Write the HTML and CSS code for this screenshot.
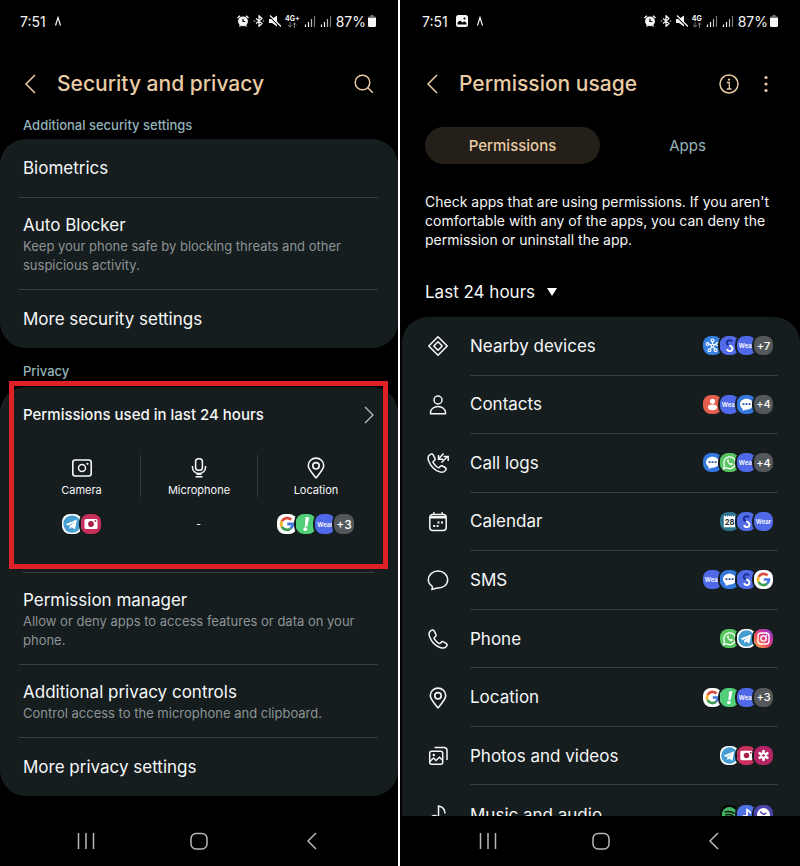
FILE: index.html
```html
<!DOCTYPE html>
<html lang="en">
<head>
  <meta charset="UTF-8">
  <meta name="viewport" content="width=device-width, initial-scale=1">
  <title>Security and privacy</title>
  <link rel="stylesheet" href="styles.css">
</head>
<body>

  <!-- icon sprite -->
  <svg class="sprite" aria-hidden="true">
    <defs>
      <linearGradient id="insta-bg" x1="0" y1="1" x2="1" y2="0">
        <stop offset="0" stop-color="#f9c04e"/>
        <stop offset=".4" stop-color="#ef4a5a"/>
        <stop offset=".7" stop-color="#c133a8"/>
        <stop offset="1" stop-color="#6a45d8"/>
      </linearGradient>
    </defs>

    <symbol id="i-alarm" viewBox="0 0 12 12">
      <path d="M.5 3L3 .8M11.5 3L9 .8M2.5 11.5l1-1.2M9.5 11.5l-1-1.2" stroke="currentColor" stroke-width="1.4"/>
      <circle cx="6" cy="6.3" r="4.9" fill="currentColor"/>
      <path d="M6 3.8v2.7h2.3" stroke="#000" stroke-width="1.2" fill="none"/>
    </symbol>
    <symbol id="i-bt" viewBox="0 0 12 12">
      <path d="M3 3.5l6 5-3 2.8V.7l3 2.8-6 5M.8 6h1.4M9.8 6h1.4" fill="none" stroke="currentColor" stroke-width="1.2"/>
    </symbol>
    <symbol id="i-mute" viewBox="0 0 12 12">
      <path d="M0 4h3l5-3.5v11L3 8H0z" fill="currentColor"/>
      <path d="M0 1l11 11" stroke="#000" stroke-width="1.2"/>
      <path d="M1 .5l11 11" stroke="currentColor" stroke-width="1.3"/>
    </symbol>
    <symbol id="i-signal" viewBox="0 0 12 12">
      <path d="M1.5 12V9.5M4.5 12V7" stroke="currentColor" stroke-width="1.2"/>
      <path d="M7.5 12V4" stroke="#bbb" stroke-width="1.2"/>
      <path d="M10.5 12V1" stroke="#777" stroke-width="1.2"/>
    </symbol>
    <symbol id="i-battery" viewBox="0 0 8 12">
      <path d="M2.5 0h3v1.5H7a1 1 0 0 1 1 1V4H0V2.5a1 1 0 0 1 1-1h1.5z" fill="#777"/>
      <path d="M0 3h8v7.5a1.5 1.5 0 0 1-1.5 1.5h-5A1.5 1.5 0 0 1 0 10.500z" fill="currentColor"/>
    </symbol>
    <symbol id="i-caret" viewBox="0 0 8 10">
      <path d="M1.5 9.500L4 1.500 6.500 9.500" fill="none" stroke="currentColor" stroke-width="1.200"/>
    </symbol>
    <symbol id="i-picture" viewBox="0 0 12 12">
      <rect width="12" height="12" rx="2.5" fill="currentColor"/>
      <path d="M1.5 9.5V7.5L4 5.5l2.500 2 1.800-1.200 2.200 1.800v1.400z" fill="#000"/>
      <circle cx="8.5" cy="3.5" r="1.1" fill="#000"/>
    </symbol>
    <symbol id="i-updown" viewBox="0 0 10 6">
      <path d="M3 0v5M1 3.2L3 5l2-1.800M7.500 6V1M5.700 2.800L7.500 1l2 1.800" fill="none" stroke="#888" stroke-width=".9"/>
    </symbol>

    <symbol id="i-back" viewBox="0 0 24 24">
      <path d="M16 3L7 12l9 9" fill="none" stroke="currentColor" stroke-width="1.5"/>
    </symbol>
    <symbol id="i-search" viewBox="0 0 20 20">
      <path d="M13.8 13.8l5 5" stroke="currentColor" stroke-width="1.6"/>
      <circle cx="8.5" cy="8.5" r="7.3" fill="none" stroke="currentColor" stroke-width="1.5"/>
    </symbol>
    <symbol id="i-info" viewBox="0 0 20 20">
      <circle cx="10" cy="10" r="9" fill="none" stroke="currentColor" stroke-width="1.5"/>
      <path d="M7.8 8.5h2.5V15M7.7 15h4.8" fill="none" stroke="currentColor" stroke-width="1.3"/>
      <circle cx="10" cy="5.7" r="1.1" fill="currentColor"/>
    </symbol>
    <symbol id="i-dots" viewBox="0 0 20 20">
      <circle cx="10" cy="3.5" r="1.6" fill="currentColor"/>
      <circle cx="10" cy="10" r="1.6" fill="currentColor"/>
      <circle cx="10" cy="16.5" r="1.6" fill="currentColor"/>
    </symbol>
    <symbol id="i-next" viewBox="0 0 10 18">
      <path d="M1 1l8 8-8 8" fill="none" stroke="currentColor" stroke-width="1.3"/>
    </symbol>

    <symbol id="i-camera" viewBox="0 0 22 22">
      <rect x="1.8" y="3" width="18.4" height="16" rx="2.5" fill="none" stroke="currentColor" stroke-width="1.6"/>
      <circle cx="11" cy="11" r="3.5" fill="none" stroke="currentColor" stroke-width="1.5"/>
      <circle cx="16.5" cy="6.8" r="1.1" fill="currentColor"/>
    </symbol>
    <symbol id="i-mic" viewBox="0 0 22 22">
      <rect x="7.6" y="1.7" width="6.8" height="11.6" rx="2.8" fill="none" stroke="currentColor" stroke-width="1.5"/>
      <path d="M4.5 9v1.500a6.500 6 0 0 0 13 0V9M7.500 19.800h7M8.500 17.200h5" fill="none" stroke="currentColor" stroke-width="1.500"/>
    </symbol>
    <symbol id="i-pin" viewBox="0 0 22 22">
      <path d="M11 20.800C7.500 16.500 3.300 12.500 3.300 8.600a7.700 7.500 0 0 1 15.400 0C18.700 12.500 14.500 16.500 11 20.800z" fill="none" stroke="currentColor" stroke-width="1.600"/>
      <circle cx="11" cy="8.8" r="3.2" fill="none" stroke="currentColor" stroke-width="1.6"/>
    </symbol>
    <symbol id="i-nearby" viewBox="0 0 22 22">
      <path d="M11 1.800l9.200 9.200-9.200 9.200L1.800 11zM11 6.800l4.200 4.200-4.200 4.200L6.800 11z" fill="none" stroke="currentColor" stroke-width="1.600" stroke-linejoin="round"/>
    </symbol>
    <symbol id="i-person" viewBox="0 0 22 22">
      <circle cx="11" cy="6" r="4" fill="none" stroke="currentColor" stroke-width="1.5"/>
      <path d="M3.500 19.800V18.500a7.500 6 0 0 1 15 0v1.300z" fill="none" stroke="currentColor" stroke-width="1.500" stroke-linejoin="round"/>
    </symbol>
    <symbol id="i-phone" viewBox="0 0 22 22">
      <path d="M4.300 2.300C2.200 3.500 1.500 5.500 2.500 8.500c2 5.500 6 9.700 11.300 11.200 2.500.7 4.800.2 6-1.900.6-1.100.2-2-.7-2.500l-2.600-1.500c-.9-.5-1.800-.3-2.400.5l-.6.8c-.5.600-1.100.6-1.700.2a16 16 0 0 1-4.500-4.500c-.4-.6-.3-1.200.3-1.700l.7-.5c.8-.6 1-1.400.6-2.200L7.300 3.200C6.600 1.900 5.500 1.600 4.300 2.300z" fill="none" stroke="currentColor" stroke-width="1.500" stroke-linejoin="round"/>
    </symbol>
    <symbol id="i-calllog" viewBox="0 0 22 22">
      <path d="M3.300 2.300C1.200 3.500.5 5.500 1.500 8.500c2 5.500 6 9.900 11.300 11.400 2.500.7 4.800.2 6-1.900.6-1.100.2-2-.7-2.500l-2.600-1.500c-.9-.5-1.800-.3-2.400.5l-.6.8c-.5.6-1.100.600-1.700.2a16 16 0 0 1-4.500-4.700c-.4-.6-.3-1.200.3-1.700l.7-.5c.8-.6 1-1.400.6-2.200L6.300 3.200C5.600 1.900 4.500 1.600 3.300 2.300z" fill="none" stroke="currentColor" stroke-width="1.500" stroke-linejoin="round"/>
      <path d="M16.500 1.500l-4.500 5M11.500 3v4.300H16M14.500 10.500l5.500-5.500M16.500 4.500h4.700V9" fill="none" stroke="currentColor" stroke-width="1.500"/>
    </symbol>
    <symbol id="i-calendar" viewBox="0 0 22 22">
      <rect x="2.8" y="3.5" width="16.4" height="16" rx="3" fill="none" stroke="currentColor" stroke-width="1.5"/>
      <path d="M3 5h16v2.500H3zM6 1.200h1.600V4H6zM14.400 1.200H16V4h-1.600z" fill="currentColor"/>
      <path d="M10.500 11.500h2M14 11.500h2M6.200 15h2M9.600 15h2" stroke="currentColor" stroke-width="1.800"/>
    </symbol>
    <symbol id="i-bubble" viewBox="0 0 22 22">
      <path d="M4.800 20.500c.7-1.200.8-2.300.3-3.300C2.800 15.600 1.300 13.300 1.300 10.800c0-4.900 4.300-8.700 9.700-8.700s9.700 3.800 9.700 8.700-4.300 8.200-9.700 8.200c-2 .1-3.700.9-6.200 1.500z" fill="none" stroke="currentColor" stroke-width="1.500" stroke-linejoin="round"/>
    </symbol>
    <symbol id="i-photos" viewBox="0 0 22 22">
      <path d="M7.500 2.500H17a3 3 0 0 1 3 3V15" fill="none" stroke="currentColor" stroke-width="1.500"/>
      <rect x="2.700" y="6.200" width="13" height="13" rx="2" fill="none" stroke="currentColor" stroke-width="1.500"/>
      <path d="M3 16.500l3.500-3.500 2.500 2.500 3.500-3.300 3 3" fill="none" stroke="currentColor" stroke-width="1.400"/>
      <circle cx="6.800" cy="10" r="1.200" fill="currentColor"/>
    </symbol>
    <symbol id="i-music" viewBox="0 0 22 22">
      <circle cx="7.500" cy="15.500" r="4" fill="none" stroke="currentColor" stroke-width="1.500"/>
      <path d="M11.500 15.500V2c2.500.5 6.500 2.300 6.500 7.500" fill="none" stroke="currentColor" stroke-width="1.500"/>
    </symbol>

    <symbol id="n-recent" viewBox="0 0 20 20">
      <path d="M2.500 2v16M10 2v16M17.500 2v16" stroke="currentColor" stroke-width="1.500"/>
    </symbol>
    <symbol id="n-home" viewBox="0 0 20 20">
      <rect x="2" y="2.500" width="16" height="15.500" rx="5" fill="none" stroke="currentColor" stroke-width="1.500"/>
    </symbol>
    <symbol id="n-back" viewBox="0 0 20 20">
      <path d="M14 2L6 10l8 8" fill="none" stroke="currentColor" stroke-width="1.500"/>
    </symbol>

    <!-- app badges -->
    <symbol id="a-telegram" viewBox="0 0 20 20">
      <rect width="20" height="20" fill="#fff"/>
      <circle cx="10" cy="10" r="8.700" fill="#459dd1"/>
      <path d="M3.500 10.200L15 5.500l-2 10-3.300-2.300-1.800 1.700-.4-3L13 7.500l-6.500 4z" fill="#fff"/>
    </symbol>
    <symbol id="a-camera" viewBox="0 0 20 20">
      <rect width="20" height="20" fill="#c92f5c"/>
      <rect x="3.500" y="5" width="13" height="10" rx="1.500" fill="#fff"/>
      <circle cx="10" cy="10" r="2.900" fill="#a82148"/>
      <circle cx="14.500" cy="7" r=".9" fill="#a82148"/>
    </symbol>
    <symbol id="a-google" viewBox="0 0 20 20">
      <rect width="20" height="20" fill="#fff"/>
      <g fill="none" stroke-width="2.800">
        <path d="M14.200 5.800A5.800 5.800 0 0 0 4.900 7.200" stroke="#dc4c3e"/>
        <path d="M4.900 7.200a5.800 5.800 0 0 0 0 5.600" stroke="#efb62e"/>
        <path d="M4.900 12.800a5.800 5.800 0 0 0 8.800 1.700" stroke="#3a9d53"/>
        <path d="M13.700 14.500a5.800 5.800 0 0 0 2.100-4.500H10.300" stroke="#4479dc"/>
      </g>
    </symbol>
    <symbol id="a-alert" viewBox="0 0 20 20">
      <rect width="20" height="20" fill="#50cf79"/>
      <path d="M9.500 3.300h3.700l-2 9.200H8.800z" fill="#fff"/>
      <circle cx="9.300" cy="15.200" r="1.900" fill="#fff"/>
    </symbol>
    <symbol id="a-hub" viewBox="0 0 20 20">
      <rect width="20" height="20" fill="#357fe0"/>
      <g fill="none" stroke="#fff" stroke-width="1.200">
        <path d="M10 10V5M10 10L5 8M10 10l5-2M10 10l-3 5M10 10l3 5"/>
        <circle cx="10" cy="4.700" r="1.500" fill="#357fe0"/>
        <circle cx="4.800" cy="8.500" r="1.500" fill="#357fe0"/>
        <circle cx="15.200" cy="8.500" r="1.500" fill="#357fe0"/>
        <circle cx="6.800" cy="15" r="1.500" fill="#357fe0"/>
        <circle cx="13.200" cy="15" r="1.500" fill="#357fe0"/>
        <circle cx="10" cy="10.200" r="1.500" fill="#357fe0"/>
      </g>
    </symbol>
    <symbol id="a-switch" viewBox="0 0 20 20">
      <rect width="20" height="20" fill="#526be6"/>
      <path d="M12.800 5.800A3.200 3.200 0 0 0 7 7.200c0 2.600 3 2.300 4 3.500" fill="none" stroke="#1c2f9d" stroke-width="2.200"/>
      <path d="M9.500 9.800c2 .8 3.700 1.300 3.700 3.500a2.900 2.900 0 0 1-5.700.4" fill="none" stroke="#fff" stroke-width="2"/>
    </symbol>
    <symbol id="a-contacts" viewBox="0 0 20 20">
      <rect width="20" height="20" fill="#e4604c"/>
      <circle cx="10" cy="6.700" r="2.700" fill="#fff"/>
      <ellipse cx="10" cy="13" rx="4.800" ry="3" fill="#fff"/>
    </symbol>
    <symbol id="a-messages" viewBox="0 0 20 20">
      <rect width="20" height="20" fill="#3478de"/>
      <path d="M10 4c4 0 6.800 2.500 6.800 5.800S14 15.500 10 15.500c-1.800 0-2.500 1-4.500.8.500-.8.500-1.300.2-2C4.200 13.200 3.200 11.600 3.200 9.800 3.200 6.500 6 4 10 4z" fill="#fff"/>
      <path d="M5.800 9.700h2M9 9.700h2M12.200 9.700h2" stroke="#21509f" stroke-width="1.900"/>
    </symbol>
    <symbol id="a-whatsapp" viewBox="0 0 20 20">
      <rect width="20" height="20" fill="#57c560"/>
      <path d="M3.700 16.500l1-3.500A6.200 6.200 0 1 1 7 15.500z" fill="none" stroke="#fff" stroke-width="1.400"/>
      <path d="M7.500 7c-.5 3 2.500 6 5.500 5.800l.6-1.500-1.800-1-1 .8c-1-.5-1.600-1.100-2-2.100l.7-.9L8.700 6.300z" fill="#fff"/>
    </symbol>
    <symbol id="a-instagram" viewBox="0 0 20 20">
      <rect width="20" height="20" fill="url(#insta-bg)"/>
      <rect x="4.200" y="4.200" width="11.600" height="11.600" rx="3.200" fill="none" stroke="#fff" stroke-width="1.400"/>
      <circle cx="10" cy="10" r="2.800" fill="none" stroke="#fff" stroke-width="1.400"/>
      <circle cx="13.300" cy="6.700" r=".8" fill="#fff"/>
    </symbol>
    <symbol id="a-gallery" viewBox="0 0 20 20">
      <rect width="20" height="20" fill="#b42565"/>
      <path d="M10 10V5.500M10 10l3.900-2.300M10 10l3.900 2.300M10 10v4.500M10 10l-3.900 2.300M10 10L6.100 7.700" stroke="#fff" stroke-width="2.900" stroke-linecap="round"/>
      <circle cx="10" cy="10" r="1.400" fill="#b42565"/>
    </symbol>
    <symbol id="a-spotify" viewBox="0 0 20 20">
      <rect width="20" height="20" fill="#050a07"/>
      <circle cx="10" cy="10" r="8" fill="#43b563"/>
      <path d="M4.800 7.500c3.500-1 7.500-.6 10.500 1.200M5.500 10.500c3-.8 6.200-.4 8.700 1M6 13.200c2.500-.6 5-.3 7 .8" fill="none" stroke="#0b150e" stroke-width="1.500"/>
    </symbol>
    <symbol id="a-music" viewBox="0 0 20 20">
      <rect width="20" height="20" fill="#4d72e6"/>
      <path d="M10.500 13.500V4c.5 2.500 3.700 2 3.700 5" fill="none" stroke="#fff" stroke-width="1.800"/>
      <circle cx="8" cy="13.500" r="3" fill="#fff"/>
    </symbol>
    <symbol id="a-clock" viewBox="0 0 20 20">
      <rect width="20" height="20" fill="#4b43ab"/>
      <circle cx="10" cy="10" r="6.800" fill="#fff"/>
      <path d="M6.500 7l3.500 3M10 10l3-1.500" stroke="#4b43ab" stroke-width="1.500"/>
    </symbol>
  </svg>

  <!-- Security and privacy -->
  <main class="phone phone-left">
    <div class="status">
      <span class="time">7:51</span>
      <svg class="caret"><use href="#i-caret"/></svg>
      <div class="status-icons">
        <svg><use href="#i-alarm"/></svg>
        <svg><use href="#i-bt"/></svg>
        <svg><use href="#i-mute"/></svg>
        <span class="net">4G+<svg><use href="#i-updown"/></svg></span>
        <svg><use href="#i-signal"/></svg>
        <svg><use href="#i-signal"/></svg>
        <span class="battery">87%<svg><use href="#i-battery"/></svg></span>
      </div>
    </div>

    <header class="header">
      <button class="icon-btn back" aria-label="Back"><svg><use href="#i-back"/></svg></button>
      <h1>Security and privacy</h1>
      <button class="icon-btn" aria-label="Search"><svg><use href="#i-search"/></svg></button>
    </header>

    <h2 class="section-label">Additional security settings</h2>
    <div class="card">
      <a class="item single" href="#"><span class="item-title">Biometrics</span></a>
      <a class="item" href="#">
        <span class="item-title">Auto Blocker</span>
        <span class="item-text">Keep your phone safe by blocking threats and other suspicious activity.</span>
      </a>
      <a class="item single" href="#"><span class="item-title">More security settings</span></a>
    </div>

    <h2 class="section-label privacy-label">Privacy</h2>
    <div class="card">
      <section class="usage">
        <a class="usage-head" href="#">
          <span>Permissions used in last 24 hours</span>
          <svg><use href="#i-next"/></svg>
        </a>
        <div class="usage-cols">
          <div class="usage-col">
            <div class="usage-kind"><svg><use href="#i-camera"/></svg>Camera</div>
            <div class="badges">
              <svg class="badge"><use href="#a-telegram"/></svg>
              <svg class="badge"><use href="#a-camera"/></svg>
            </div>
          </div>
          <div class="usage-col">
            <div class="usage-kind"><svg><use href="#i-mic"/></svg>Microphone</div>
            <div class="badges">-</div>
          </div>
          <div class="usage-col">
            <div class="usage-kind"><svg><use href="#i-pin"/></svg>Location</div>
            <div class="badges">
              <svg class="badge"><use href="#a-google"/></svg>
              <svg class="badge"><use href="#a-alert"/></svg>
              <span class="badge wear">Wear</span>
              <span class="badge more">+3</span>
            </div>
          </div>
        </div>
        <div class="highlight"></div>
      </section>
      <a class="item" href="#">
        <span class="item-title">Permission manager</span>
        <span class="item-text">Allow or deny apps to access features or data on your phone.</span>
      </a>
      <a class="item" href="#">
        <span class="item-title">Additional privacy controls</span>
        <span class="item-text">Control access to the microphone and clipboard.</span>
      </a>
      <a class="item single" href="#"><span class="item-title">More privacy settings</span></a>
    </div>

    <nav class="navbar">
      <button aria-label="Recent apps"><svg><use href="#n-recent"/></svg></button>
      <button aria-label="Home"><svg><use href="#n-home"/></svg></button>
      <button aria-label="Back"><svg><use href="#n-back"/></svg></button>
    </nav>
  </main>

  <!-- Permission usage -->
  <main class="phone phone-right">
    <div class="status">
      <span class="time">7:51</span>
      <svg><use href="#i-picture"/></svg>
      <svg class="caret"><use href="#i-caret"/></svg>
      <div class="status-icons">
        <svg><use href="#i-alarm"/></svg>
        <svg><use href="#i-bt"/></svg>
        <svg><use href="#i-mute"/></svg>
        <span class="net">4G<svg><use href="#i-updown"/></svg></span>
        <svg><use href="#i-signal"/></svg>
        <svg><use href="#i-signal"/></svg>
        <span class="battery">87%<svg><use href="#i-battery"/></svg></span>
      </div>
    </div>

    <header class="header">
      <button class="icon-btn back" aria-label="Back"><svg><use href="#i-back"/></svg></button>
      <h1>Permission usage</h1>
      <button class="icon-btn" aria-label="Info"><svg><use href="#i-info"/></svg></button>
      <button class="icon-btn" aria-label="More options"><svg><use href="#i-dots"/></svg></button>
    </header>

    <div class="tabs" role="tablist">
      <button class="tab active" role="tab" aria-selected="true">Permissions</button>
      <button class="tab" role="tab" aria-selected="false">Apps</button>
    </div>

    <p class="intro">Check apps that are using permissions. If you aren't comfortable with any of the apps, you can deny the permission or uninstall the app.</p>

    <div class="period">
      <select aria-label="Period">
        <option>Last 24 hours</option>
      </select>
      <svg viewBox="0 0 10 8"><path d="M0 0h10L5 8z" fill="#fff"/></svg>
    </div>

    <div class="list-wrap">
      <ul class="card list">
        <li>
          <svg class="row-icon"><use href="#i-nearby"/></svg>
          <a class="row" href="#">Nearby devices
            <span class="badges">
              <svg class="badge"><use href="#a-hub"/></svg>
              <svg class="badge"><use href="#a-switch"/></svg>
              <span class="badge wear">Wear</span>
              <span class="badge more">+7</span>
            </span>
          </a>
        </li>
        <li>
          <svg class="row-icon"><use href="#i-person"/></svg>
          <a class="row" href="#">Contacts
            <span class="badges">
              <svg class="badge"><use href="#a-contacts"/></svg>
              <span class="badge wear">Wear</span>
              <svg class="badge"><use href="#a-messages"/></svg>
              <span class="badge more">+4</span>
            </span>
          </a>
        </li>
        <li>
          <svg class="row-icon"><use href="#i-calllog"/></svg>
          <a class="row" href="#">Call logs
            <span class="badges">
              <svg class="badge"><use href="#a-messages"/></svg>
              <svg class="badge"><use href="#a-whatsapp"/></svg>
              <span class="badge wear">Wear</span>
              <span class="badge more">+4</span>
            </span>
          </a>
        </li>
        <li>
          <svg class="row-icon"><use href="#i-calendar"/></svg>
          <a class="row" href="#">Calendar
            <span class="badges">
              <svg class="badge" viewBox="0 0 20 20">
                <rect width="20" height="20" fill="#2f748d"/>
                <path d="M4 5l1-1.500L6 5l1-1.500L8 5l1-1.500L10 5l1-1.500L12 5l1-1.500L14 5l1-1.500L16 5v11H4z" fill="#fff"/>
                <text x="10" y="14" text-anchor="middle" class="badge-day">28</text>
              </svg>
              <svg class="badge"><use href="#a-switch"/></svg>
              <span class="badge wear">Wear</span>
            </span>
          </a>
        </li>
        <li>
          <svg class="row-icon"><use href="#i-bubble"/></svg>
          <a class="row" href="#">SMS
            <span class="badges">
              <span class="badge wear">Wear</span>
              <svg class="badge"><use href="#a-messages"/></svg>
              <svg class="badge"><use href="#a-switch"/></svg>
              <svg class="badge"><use href="#a-google"/></svg>
            </span>
          </a>
        </li>
        <li>
          <svg class="row-icon"><use href="#i-phone"/></svg>
          <a class="row" href="#">Phone
            <span class="badges">
              <svg class="badge"><use href="#a-whatsapp"/></svg>
              <svg class="badge"><use href="#a-telegram"/></svg>
              <svg class="badge"><use href="#a-instagram"/></svg>
            </span>
          </a>
        </li>
        <li>
          <svg class="row-icon"><use href="#i-pin"/></svg>
          <a class="row" href="#">Location
            <span class="badges">
              <svg class="badge"><use href="#a-google"/></svg>
              <svg class="badge"><use href="#a-alert"/></svg>
              <span class="badge wear">Wear</span>
              <span class="badge more">+3</span>
            </span>
          </a>
        </li>
        <li>
          <svg class="row-icon"><use href="#i-photos"/></svg>
          <a class="row" href="#">Photos and videos
            <span class="badges">
              <svg class="badge"><use href="#a-telegram"/></svg>
              <svg class="badge"><use href="#a-camera"/></svg>
              <svg class="badge"><use href="#a-gallery"/></svg>
            </span>
          </a>
        </li>
        <li>
          <svg class="row-icon"><use href="#i-music"/></svg>
          <a class="row" href="#">Music and audio
            <span class="badges">
              <svg class="badge"><use href="#a-spotify"/></svg>
              <svg class="badge"><use href="#a-music"/></svg>
              <svg class="badge"><use href="#a-clock"/></svg>
            </span>
          </a>
        </li>
      </ul>
    </div>

    <nav class="navbar">
      <button aria-label="Recent apps"><svg><use href="#n-recent"/></svg></button>
      <button aria-label="Home"><svg><use href="#n-home"/></svg></button>
      <button aria-label="Back"><svg><use href="#n-back"/></svg></button>
    </nav>
  </main>

</body>
</html>
```
FILE: styles.css
```css
* { box-sizing: border-box; }
body { margin: 0; display: grid; grid-template-columns: 1fr 1fr; height: 100vh; background: #000; color: #f5f7f7; font-family: Inter, Roboto, sans-serif; }
h1, h2, p, ul { margin: 0; padding: 0; }
ul { list-style: none; }
a { color: inherit; text-decoration: none; }
button, select { padding: 0; border: 0; background: none; color: inherit; font: inherit; }
svg { display: block; flex: none; }
.sprite { position: absolute; width: 0; height: 0; }

.phone { display: flex; flex-direction: column; min-width: 0; height: 100vh; }
.phone-left { border-right: 2px solid #fff; }
.phone-right { padding-left: 2px; }

/* status bar */
.status { display: flex; align-items: center; gap: 8px; height: 42px; padding: 0 22px 0 20px; font-size: 14px; }
.status svg { width: 12px; height: 12px; }
.status .caret { width: 8px; height: 10px; }
.status-icons { display: flex; align-items: center; gap: 4px; margin-left: auto; }
.net { display: flex; flex-direction: column; align-items: center; font-size: 7px; line-height: 7px; font-weight: 700; }
.status .net svg { width: 10px; height: 6px; }
.battery { display: flex; align-items: center; gap: 2px; }
.status .battery svg { width: 8px; }

/* header */
.header { display: flex; align-items: center; gap: 17px; height: 48px; margin-top: 18px; padding: 0 24px 0 19px; color: #e9cba5; }
.header h1 { flex: 1; margin-left: -3px; font-size: 21px; line-height: 28px; font-weight: 500; }
.icon-btn svg { width: 20px; height: 20px; }
.back svg { width: 24px; height: 24px; }

.section-label { margin: 7px 23px 4px; color: #93b3b9; font-size: 13px; line-height: 20px; font-weight: 500; }
.privacy-label { margin: 13px 23px 6px; }

.card { background: #161d1f; border-radius: 26px; }

/* settings items */
.item { display: block; margin: 0 20px 0 19px; padding: 15px 4px 14px; border-bottom: 1px solid #363d3f; }
.item:last-child { border-bottom: 0; }
.single { padding: 17px 4px; }
.item-title { display: block; font-size: 17px; line-height: 24px; }
.item-text { display: block; color: #8d9394; font-size: 13px; line-height: 19px; }

/* permissions used */
.usage { position: relative; margin: 0 24px 0 23px; padding: 16px 0 38px; border-bottom: 1px solid #363d3f; }
.usage-head { display: flex; justify-content: space-between; align-items: center; font-size: 15px; line-height: 24px; font-weight: 500; }
.usage-head svg { width: 10px; height: 18px; color: #b9bdbe; }
.usage-cols { display: grid; grid-template-columns: repeat(3, 1fr); margin-top: 28px; font-size: 11px; text-align: center; }
.usage-kind { display: flex; flex-direction: column; align-items: center; gap: 2px; height: 42px; padding-top: 2px; line-height: 18px; }
.usage-kind svg { width: 22px; height: 22px; }
.usage-col + .usage-col .usage-kind { border-left: 1px solid #363d3f; }
.usage-col .badges { height: 20px; margin-top: 17px; }
.highlight { position: absolute; top: -6px; right: -14px; bottom: 3px; left: -14px; border: 5px solid #de2027; pointer-events: none; }

/* app badges */
.badges { display: flex; justify-content: center; align-items: center; }
.badge { width: 20px; height: 20px; border-radius: 8px; overflow: hidden; box-shadow: 0 0 0 2px #161d1f; }
.badge + .badge { margin-left: -1px; }
.wear, .more { display: flex; flex: none; justify-content: center; align-items: center; color: #fff; white-space: nowrap; }
.wear { background: #5069e8; font-size: 6px; font-weight: 600; }
.more { background: #55585a; font-size: 12px; font-weight: 500; }
.badge-day { font-size: 8px; font-weight: 700; fill: #20323a; }

/* tabs */
.tabs { display: grid; grid-template-columns: 1fr 1fr; margin: 19px 25px 0 23px; }
.tab { height: 37px; border-radius: 19px; color: #93b3b9; font-size: 15px; }
.tab.active { background: #242019; color: #e9cba5; font-weight: 500; }

.intro { margin: 28px 23px 0; font-size: 14px; line-height: 19px; }
.period { display: flex; align-items: center; gap: 11px; margin: 31px 23px 13px; }
.period select { appearance: none; height: 24px; font-size: 17px; }
.period svg { width: 10px; height: 8px; }

/* permission list, cut off by the navigation bar */
.list-wrap { flex: 1; min-height: 0; overflow: hidden; }
.list { display: grid; grid-auto-rows: 1fr; min-height: 527px; }
.list li { display: flex; align-items: center; gap: 21px; padding: 0 22px 0 25px; }
.row-icon { width: 22px; height: 22px; }
.row { display: flex; flex: 1; justify-content: space-between; align-items: center; height: 100%; padding-right: 5px; border-bottom: 1px solid #363d3f; font-size: 17px; }
.list li:last-child .row { border-bottom: 0; }
.list .badge { width: 19px; height: 19px; }
.list .badge + .badge { margin-left: -2px; }
.list .more { font-size: 11px; }

/* navigation bar */
.navbar { display: grid; grid-template-columns: repeat(3, 1fr); height: 50px; margin-top: auto; padding: 0 30px; color: #b8b8b8; }
.navbar button { display: flex; justify-content: center; align-items: center; }
.navbar svg { width: 20px; height: 20px; }
```
